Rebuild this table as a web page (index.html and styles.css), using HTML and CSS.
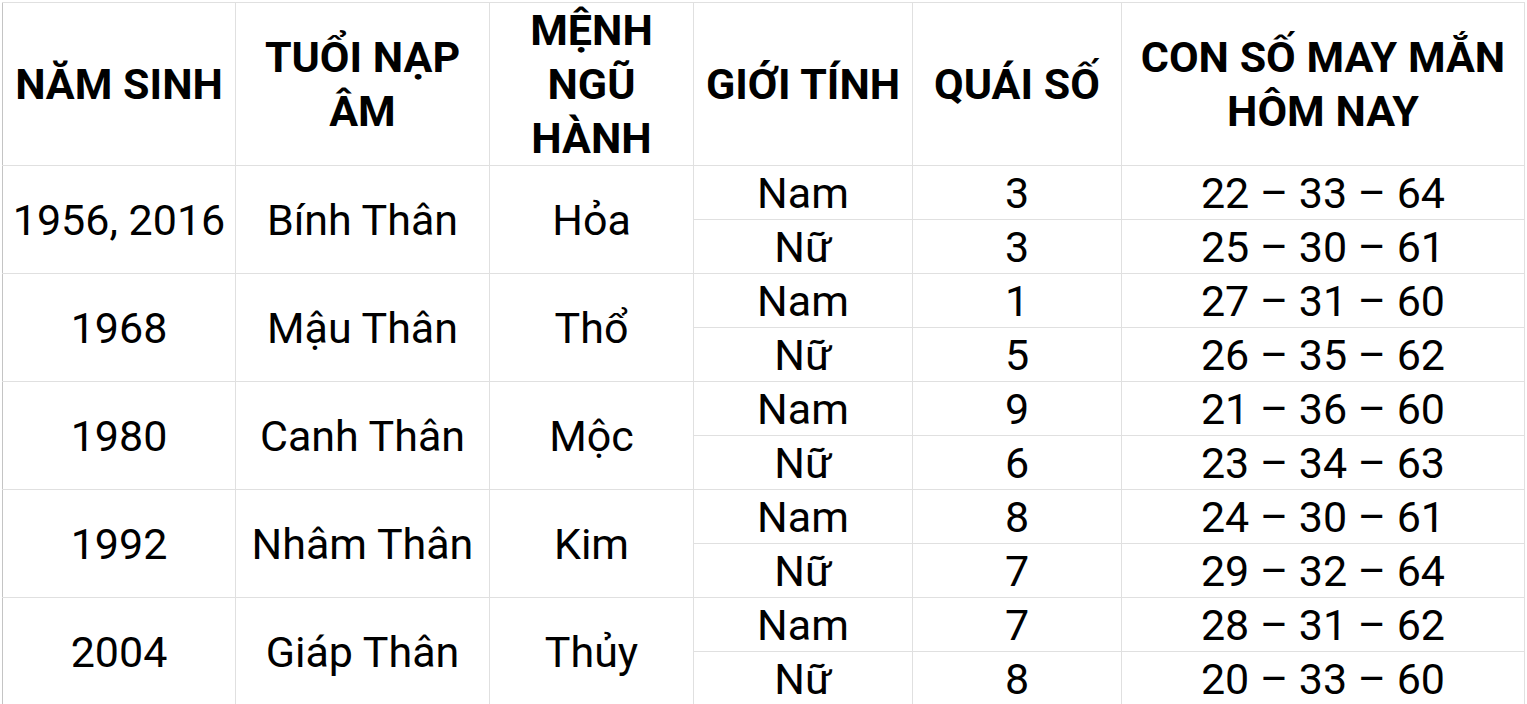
FILE: index.html
```html
<!DOCTYPE html>
<html lang="vi">
<head>
<meta charset="utf-8">
<title>Con số may mắn</title>
<link rel="stylesheet" href="styles.css">
</head>
<body>
<table class="sheet">
  <colgroup>
    <col class="c1"><col class="c2"><col class="c3"><col class="c4"><col class="c5"><col class="c6">
  </colgroup>
  <thead>
    <tr class="head">
      <th>NĂM SINH</th>
      <th>TUỔI NẠP<br>ÂM</th>
      <th>MỆNH<br>NGŨ<br>HÀNH</th>
      <th>GIỚI TÍNH</th>
      <th>QUÁI SỐ</th>
      <th>CON SỐ MAY MẮN<br>HÔM NAY</th>
    </tr>
  </thead>
  <tbody>
    <tr><td rowspan="2">1956, 2016</td><td rowspan="2">Bính Thân</td><td rowspan="2">Hỏa</td><td>Nam</td><td>3</td><td>22 – 33 – 64</td></tr>
    <tr><td>Nữ</td><td>3</td><td>25 – 30 – 61</td></tr>
    <tr><td rowspan="2">1968</td><td rowspan="2">Mậu Thân</td><td rowspan="2">Thổ</td><td>Nam</td><td>1</td><td>27 – 31 – 60</td></tr>
    <tr><td>Nữ</td><td>5</td><td>26 – 35 – 62</td></tr>
    <tr><td rowspan="2">1980</td><td rowspan="2">Canh Thân</td><td rowspan="2">Mộc</td><td>Nam</td><td>9</td><td>21 – 36 – 60</td></tr>
    <tr><td>Nữ</td><td>6</td><td>23 – 34 – 63</td></tr>
    <tr><td rowspan="2">1992</td><td rowspan="2">Nhâm Thân</td><td rowspan="2">Kim</td><td>Nam</td><td>8</td><td>24 – 30 – 61</td></tr>
    <tr><td>Nữ</td><td>7</td><td>29 – 32 – 64</td></tr>
    <tr><td rowspan="2">2004</td><td rowspan="2">Giáp Thân</td><td rowspan="2">Thủy</td><td>Nam</td><td>7</td><td>28 – 31 – 62</td></tr>
    <tr><td>Nữ</td><td>8</td><td>20 – 33 – 60</td></tr>
  </tbody>
</table>
</body>
</html>
```

FILE: styles.css
```css
html, body {
  margin: 0;
  padding: 0;
  background: #ffffff;
  overflow: hidden;
}
body {
  padding: 2px 0 0 2px;
  font-family: Roboto, "Liberation Sans", Arial, sans-serif;
  color: #000000;
}
.sheet {
  border-collapse: collapse;
  table-layout: fixed;
  width: 1522px;
}
.c1 { width: 233px; }
.c2 { width: 254px; }
.c3 { width: 204px; }
.c4 { width: 219px; }
.c5 { width: 209px; }
.c6 { width: 403px; }
.sheet th,
.sheet td {
  border: 1px solid #e0e0e0;
  padding: 0;
  text-align: center;
  vertical-align: middle;
  font-size: 43px;
  white-space: nowrap;
}
.sheet th {
  font-weight: 700;
  line-height: 54px;
}
.sheet td {
  font-weight: 400;
  line-height: 48px;
}
.head {
  height: 163px;
}
.sheet tbody tr {
  height: 54px;
}
.sheet tr > :first-child {
  border-left-color: #c4c4c4;
}
```
